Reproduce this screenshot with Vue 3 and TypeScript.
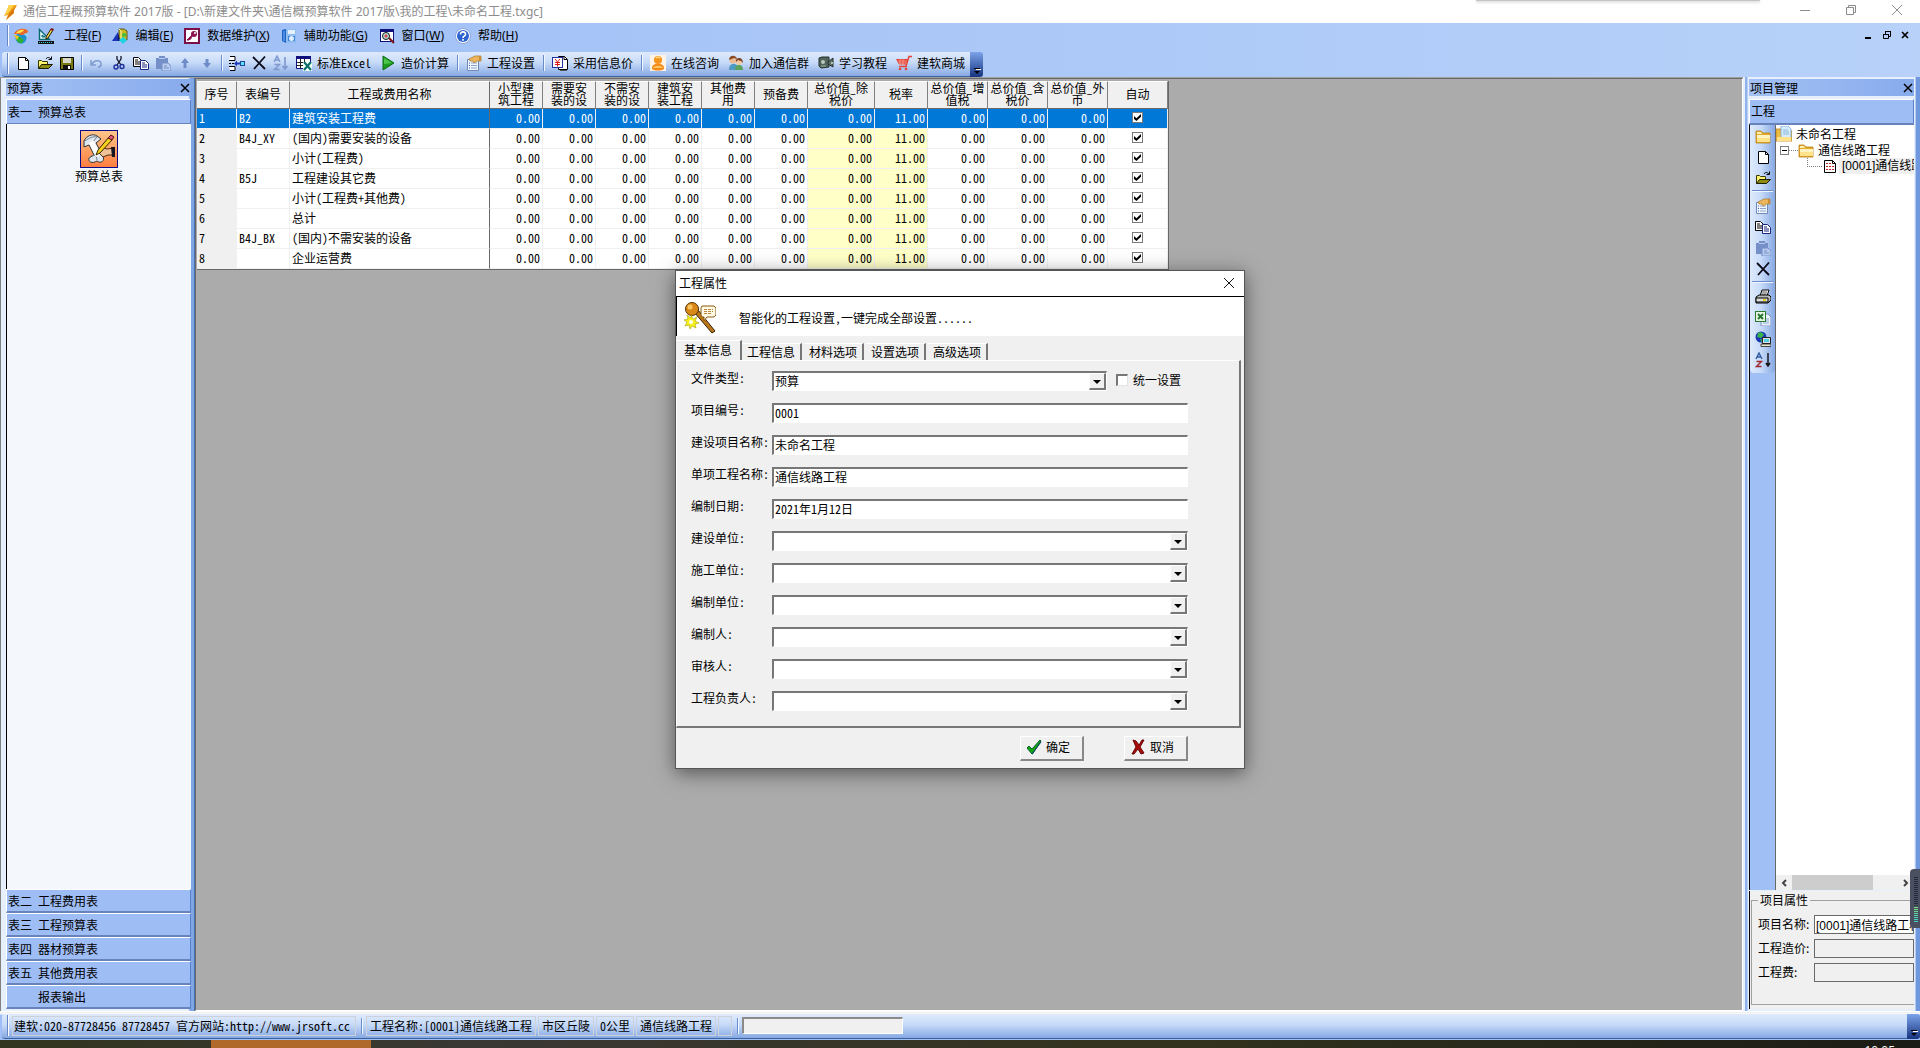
<script setup lang="ts">
import { ref } from 'vue'

const icons: Record<string, string> = {
  logo: '<path d="M7 1h8l-3 5v3L4 16l2-5-4 1 3-6z" fill="#f6a81c"/><path d="M7 1h5L6 9l-3 2 2-5z" fill="#ffd34d"/><path d="M15 1l-3 5v3L4 16l4-8z" fill="#d9780c"/>',
  globe: '<circle cx="8" cy="10" r="5.500" fill="#1c8fd0"/><path d="M3 10c3-3 5 0 8 2l-2 3c-3 1-6-2-6-5z" fill="#2fae3a"/><path d="M1 6c2-5 11-7 14-3 0 4-8 5-9 3z" fill="#e8662a"/><path d="M3 5c2-3 6-4 8-3-1 2-5 4-8 3z" fill="#ffe04a"/><path d="M1 7l5 1-2 4z" fill="#f8c21a"/><path d="M10 6l5-1v4z" fill="#8fd8ff"/>',
  ruler: '<path d="M1.500 1.500v10h10z" fill="#e8ffff" stroke="#086870" stroke-width="1.400"/><path d="M4 7v2h3z" fill="#9fc3f5" stroke="#086870"/><path d="M0 13h16v3H0z" fill="#101010"/><path d="M1 14.500h14" stroke="#34cfe0" stroke-dasharray="1 1"/><path d="M8 9l5-8 2 1-5 8-2 1z" fill="#f5df51" stroke="#201800"/><path d="M12 2l1.500-2L16 1l-1 2z" fill="#8b1c1c"/>',
  shapes: '<path d="M7 1h5l3 2v9h-6l-2-2z" fill="#c9bb24" stroke="#5e5710"/><path d="M7 1l2 2v9" stroke="#fff3a0" fill="none"/><path d="M6 4v9H0z" fill="#1931b5"/><path d="M6 4l2 9H6z" fill="#0a1566"/><path d="M7 12l4-3 4 3-4 4z" fill="#1ad5df"/><circle cx="12" cy="7" r="2" fill="#3fbf3f"/>',
  key: '<rect x="1" y="1" width="14" height="14" fill="#fff" stroke="#7b1048" stroke-width="2"/><circle cx="10" cy="6" r="3" fill="#8c1450"/><circle cx="11" cy="5" r="1" fill="#fff"/><path d="M8 7l-5 5h2l1-1h1v-2h1z" fill="#8c1450" stroke="#8c1450"/>',
  help2: '<path d="M1 2l4-1v14l-4-2z" fill="#1d63c8"/><path d="M5 1h10v14H5z" fill="#8fbdf0"/><path d="M7 2h7v4H7z" fill="#e3f0ff"/><path d="M7 8h7v5H7z" fill="#3f82d8"/><circle cx="10.500" cy="10.500" r="2.500" fill="#dfeeff"/><path d="M3 3v10" stroke="#7fb4f8"/>',
  find: '<rect x="1.500" y="1.500" width="13" height="12" fill="#fff" stroke="#10107a"/><path d="M1 1h14v3H1z" fill="#10107a"/><circle cx="7" cy="8" r="3.500" fill="#b5f0ee" stroke="#101010"/><path d="M5 8h4M7 6v4" stroke="#e11d1d"/><path d="M10 10l5 5" stroke="#7a1212" stroke-width="2"/>',
  help: '<circle cx="8" cy="8" r="7.500" fill="#fff" stroke="#8ea5d8"/><circle cx="8" cy="8" r="6" fill="#2a62cf"/><path d="M5.500 6.500c0-4 5.500-3 5 0-.3 1.500-2.500 1.500-2.500 3.500M8 11v1.800" stroke="#fff" stroke-width="1.700" fill="none"/>',
  new: '<path d="M3.500 2.500h7l3 3v9h-10z" fill="#fff" stroke="#000"/><path d="M10.500 2.500v3h3" fill="none" stroke="#000"/>',
  open: '<path d="M1.500 13.500v-8h3l1 1h5v3" fill="#fff36b" stroke="#3a3a00"/><path d="M1.500 13.500l3-4h11l-4 4z" fill="#8c8c12" stroke="#1d1d00"/><path d="M9 4c1-2 3-2 5 0M14.500 1.500v3h-3" fill="none" stroke="#000"/>',
  save: '<path d="M1.500 2.500h13v12h-13z" fill="#7a7a12" stroke="#000"/><path d="M4 3h8v5H4z" fill="#d8d8c8"/><path d="M4 10h8v4H4z" fill="#111"/><path d="M9 11h2v3H9z" fill="#fff"/>',
  undo: '<path d="M2 5v5h5M3 9c3-5 10-4 9 1-.3 1.500-2 2-3 2" stroke="#7d9bd0" fill="none" stroke-width="1.500"/>',
  cut: '<path d="M6 1v3l4 6M10 1v3l-4 6" stroke="#14142a" fill="none" stroke-width="1.300"/><circle cx="5" cy="12" r="2" fill="none" stroke="#1c2e9a" stroke-width="1.400"/><circle cx="11" cy="11.500" r="2" fill="none" stroke="#1c2e9a" stroke-width="1.400"/>',
  copy: '<path d="M.5 2.500h5l3 3v6h-8z" fill="#fff" stroke="#000"/><path d="M2 5h3M2 7h5M2 9h5" stroke="#000"/><path d="M7.500 5.500h5l3 3v6h-8z" fill="#fff" stroke="#1a237f"/><path d="M9 8h3M9 10h5M9 12h5" stroke="#1a237f"/>',
  paste: '<path d="M1 3h3V1h6v2h3v11H1z" fill="#7590c8"/><path d="M4 3h6v1H4z" fill="#b8cbee"/><path d="M7 8h6l3 3v5H7z" fill="#b9cbee" stroke="#7590c8"/><path d="M9 11h3M9 13h5" stroke="#7590c8"/>',
  up: '<path d="M8 3l4 5H9.500v5h-3V8H4z" fill="#6e8cc8"/>',
  down: '<path d="M8 13l4-5H9.500V4h-3v4H4z" fill="#6e8cc8"/>',
  tree: '<path d="M1 1.500h5v4H0M1 15.500h5v-4H0" fill="#fff" stroke="#000"/><path d="M0 8.500h6" stroke="#000" stroke-dasharray="2 1"/><path d="M5 8.500l3-3v2h3v2H8v2z" fill="#1d3bb8"/><rect x="11.500" y="6.500" width="4" height="4" fill="#59e6f0" stroke="#2048a0"/>',
  del: '<path d="M2 2l12 12M14 1.500L3 14" stroke="#0c0c18" stroke-width="1.800"/>',
  sort: '<path d="M1 7l3-6 3 6M2 5h4M1.500 9.500h5l-5 5h5" stroke="#7d98cd" fill="none" stroke-width="1.400"/><path d="M12 2v11M9.500 11l2.500 3 2.500-3" stroke="#7d98cd" fill="none" stroke-width="1.600"/>',
  sortc: '<path d="M1 7l3-6 3 6M2 5h4" stroke="#315c9f" fill="none" stroke-width="1.400"/><path d="M1.500 9.500h5l-5 5h5" stroke="#a1282c" fill="none" stroke-width="1.400"/><path d="M13 1v12M11 11l2 3 2-3" stroke="#111" fill="none" stroke-width="1.400"/>',
  excel: '<path d="M0 1h15v3H0z" fill="#10107a"/><path d="M.5 4v9.500h14V4" fill="#fff" stroke="#10107a"/><path d="M1 7.500h13M1 10.500h13M4.500 4v9M8.500 4v9" stroke="#222"/><path d="M7 7h9v9H7z" fill="#e9fff2"/><path d="M8 7l7 8M15 7l-7 8" stroke="#0b6b6b" stroke-width="2"/>',
  play: '<path d="M3 1l11 7-11 7z" fill="#1e9a1e" stroke="#0c6d14"/><path d="M4 3l8 5-8 1z" fill="#4fc64a"/>',
  props: '<path d="M1.500 4.500h11v11h-11z" fill="#f0f6ff" stroke="#7089b8"/><path d="M5 8h6M5 10.500h6M5 13h6" stroke="#8da2c8"/><path d="M3 8h1M3 10.500h1M3 13h1" stroke="#2d62c0"/><path d="M3 4l6-3h6v5h-4l-3 2-1-2H4z" fill="#edb65b" stroke="#a8762a" stroke-width=".7"/><path d="M13 1h2v5h-2z" fill="#c98d35"/>',
  price: '<path d="M6.500 1.500h6l3 3v10h-9z" fill="#fff" stroke="#000"/><path d="M12 1.500v3h3" stroke="#000" fill="none"/><path d="M8 15.500h7" stroke="#555"/><rect x=".5" y="2.500" width="10" height="10" fill="#fff" stroke="#2631a0"/><path d="M3 4l2.500 3L8 4M3 7.500h5M3 9.500h5M5.500 7v4.500" stroke="#d81919" fill="none"/>',
  user: '<rect width="16" height="16" fill="#fdf2e4"/><path d="M2 14c0-5 3-5 6-5s6 0 6 5c-3 2-9 2-12 0z" fill="#f28a1a"/><circle cx="8" cy="5" r="4" fill="#f7941d"/><path d="M6 3c1-1 3-1 4 0" stroke="#ffe08a" stroke-width="1.500" fill="none"/><path d="M3 13c2-3 8-3 10 0" fill="#ffc45b"/>',
  users: '<path d="M1 15c0-5 2-6 5-6s4 2 4 6z" fill="#4d9ac2"/><path d="M7 15c0-4 2-5 4-5s4 1 4 5z" fill="#5aa35c"/><circle cx="5" cy="5" r="3.500" fill="#e8bb92"/><path d="M1 5c0-6 8-5 8-1L6 3z" fill="#8a4b2a"/><circle cx="11" cy="7" r="3" fill="#f0c8a4"/><path d="M8 7c-1-5 7-6 7 1l-2-2-3-1z" fill="#7b3f20"/>',
  video: '<path d="M1 3l3-1h7v10l-8 1-2-2z" fill="#50645a" stroke="#26302c"/><path d="M10 7l5-4v9l-5-3z" fill="#5d6d66" stroke="#26302c"/><circle cx="5" cy="7" r="2" fill="#b9c9be"/><path d="M3 11h5" stroke="#9db3a5"/><circle cx="14" cy="8" r="1" fill="#c7e8d1"/>',
  cart: '<path d="M0 4h12l-1.500 5.500H3z" fill="#e34234"/><path d="M10 11l3-9.500h3M3 11.500h8" stroke="#e34234" stroke-width="1.500" fill="none"/><path d="M2 6h9M3 8h8M4 4v6M7 4v6" stroke="#f8b9ad" stroke-width=".6"/><circle cx="4" cy="14" r="1.300" fill="#e34234"/><circle cx="10" cy="14" r="1.300" fill="#e34234"/>',
  folder: '<path d="M1 3h5l2 2h7v10H1z" fill="#e3a92a" stroke="#b98116" stroke-width=".8"/><path d="M2 4h4l1 2H2z" fill="#fff0b0"/><path d="M2 7h13v7H2z" fill="#ffe28a"/><path d="M2 7h13v3H2z" fill="#fff3bf"/>',
  docs: '<path d="M0 3h5v2h11v10H0z" fill="#eebb42" stroke="#b98116" stroke-width=".8"/><path d="M5 0h7l3 3v9H5z" fill="#d4ecfc" stroke="#77a7cf" stroke-width=".8"/><path d="M7 4h5M7 6h6M7 8h6" stroke="#8db7dc"/><path d="M1 11h14v4H1z" fill="#ffe28a"/>',
  report: '<path d="M2.500 2.500h8l3 3v9h-11z" fill="#fff" stroke="#000"/><path d="M10.500 2.500v3h3" fill="none" stroke="#000"/><path d="M4 5.500h5M4 8.500h8M4 11.500h8" stroke="#c42424" stroke-dasharray="2 1"/>',
  print: '<path d="M5 7l2-6h7l-2 6z" fill="#fff" stroke="#000"/><path d="M7 3h5M6.500 5h5" stroke="#555"/><path d="M1 8l3-2h10l2 2v3l-3 3H1z" fill="#b9b9b9" stroke="#000"/><path d="M1 9h12v4H1z" fill="#dcdcdc" stroke="#000"/><path d="M8 11h3" stroke="#e4d31c" stroke-width="2"/>',
  xls: '<path d="M6 4h7l3 3v9H6z" fill="#e7f0fa" stroke="#7c92b8"/><path d="M8 9h6M8 11h6M8 13h6" stroke="#8fa9d4"/><rect x=".5" y="1.500" width="10" height="10" fill="#e6f4e4" stroke="#2b7a34"/><path d="M3 4l5 5M8 4L3 9" stroke="#26762f" stroke-width="2"/>',
  net: '<circle cx="6" cy="6" r="5.500" fill="#1b36b4"/><path d="M3 2c3-2 5 0 6 2l-3 3-4-1zM5 8l4 1-2 3z" fill="#38b54a"/><path d="M7.500 6.500h8v6h-8z" fill="#ddd" stroke="#222"/><path d="M9 8h5v3H9z" fill="#4fd0e8"/><path d="M6 13h10v2.500H6z" fill="#e4e4cc" stroke="#222" stroke-width=".8"/>',
}

const menus = [
  { icon: 'ruler', text: '工程', key: 'F' },
  { icon: 'shapes', text: '编辑', key: 'E' },
  { icon: 'key', text: '数据维护', key: 'X' },
  { icon: 'help2', text: '辅助功能', key: 'G' },
  { icon: 'find', text: '窗口', key: 'W' },
  { icon: 'help', text: '帮助', key: 'H' },
]

const tools: { icon: string; text?: string }[] = [
  { icon: 'new' }, { icon: 'open' }, { icon: 'save' }, { icon: '|' },
  { icon: 'undo' }, { icon: 'cut' }, { icon: 'copy' }, { icon: 'paste' }, { icon: 'up' }, { icon: 'down' }, { icon: '|' },
  { icon: 'tree' }, { icon: 'del' }, { icon: 'sort' },
  { icon: 'excel', text: '标准Excel' }, { icon: 'play', text: '造价计算' }, { icon: '|' },
  { icon: 'props', text: '工程设置' }, { icon: '|' },
  { icon: 'price', text: '采用信息价' }, { icon: '|' },
  { icon: 'user', text: '在线咨询' }, { icon: 'users', text: '加入通信群' },
  { icon: 'video', text: '学习教程' }, { icon: 'cart', text: '建软商城' },
]

const sideTools = ['folder', 'new', 'open', '|', 'props', 'copy', 'paste', 'del', '|', 'print', 'xls', 'net', 'sortc']

const sections = ['表二 工程费用表', '表三 工程预算表', '表四 器材预算表', '表五 其他费用表']

const columns = [
  { text: '序号', w: 40 }, { text: '表编号', w: 53 }, { text: '工程或费用名称', w: 200 },
  { text: '小型建\n筑工程', w: 53 }, { text: '需要安\n装的设', w: 53 }, { text: '不需安\n装的设', w: 53 },
  { text: '建筑安\n装工程', w: 53 }, { text: '其他费\n用', w: 53 }, { text: '预备费', w: 53 },
  { text: '总价值_除\n税价', w: 67 }, { text: '税率', w: 53 }, { text: '总价值_增\n值税', w: 60 },
  { text: '总价值_含\n税价', w: 60 }, { text: '总价值_外\n币', w: 60 }, { text: '自动', w: 60 },
]
const amounts = ['0.00', '0.00', '0.00', '0.00', '0.00', '0.00', '0.00', '11.00', '0.00', '0.00', '0.00']

const rows = ref([
  { code: 'B2', name: '建筑安装工程费', auto: true },
  { code: 'B4J_XY', name: '(国内)需要安装的设备', auto: true },
  { code: '', name: '小计(工程费)', auto: true },
  { code: 'B5J', name: '工程建设其它费', auto: true },
  { code: '', name: '小计(工程费+其他费)', auto: true },
  { code: '', name: '总计', auto: true },
  { code: 'B4J_BX', name: '(国内)不需安装的设备', auto: true },
  { code: '', name: '企业运营费', auto: true },
])
const selected = ref(0)

const tabs = ['基本信息', '工程信息', '材料选项', '设置选项', '高级选项']
const activeTab = ref(0)

const textFields = ref([
  { id: 'no', label: '项目编号:', value: '0001' },
  { id: 'project', label: '建设项目名称:', value: '未命名工程' },
  { id: 'single', label: '单项工程名称:', value: '通信线路工程' },
  { id: 'date', label: '编制日期:', value: '2021年1月12日' },
])
const comboFields = [
  { id: 'owner', label: '建设单位:' },
  { id: 'builder', label: '施工单位:' },
  { id: 'compiler', label: '编制单位:' },
  { id: 'author', label: '编制人:' },
  { id: 'auditor', label: '审核人:' },
  { id: 'leader', label: '工程负责人:' },
]
const unified = ref(false)
const projectName = ref('[0001]通信线路工程')
</script>

<template>
  <div class="app">
    <header class="titlebar">
      <svg class="icon" viewBox="0 0 16 16" v-html="icons.logo"></svg>
      <span class="title">通信工程概预算软件 2017版 - [D:\新建文件夹\通信概预算软件 2017版\我的工程\未命名工程.txgc]</span>
      <div class="winbtns">
        <button aria-label="最小化"><svg viewBox="0 0 12 12"><path d="M1 6.500h10" /></svg></button>
        <button aria-label="还原"><svg viewBox="0 0 12 12"><path d="M1.500 3.500h7v7h-7zM3.500 3.500v-2h7v7h-2" /></svg></button>
        <button aria-label="关闭"><svg viewBox="0 0 12 12"><path d="M1 1l10 10M11 1L1 11" /></svg></button>
      </div>
      <div class="peek"></div>
    </header>

    <nav class="menubar">
      <i class="grip"></i>
      <svg class="icon globe" viewBox="0 0 16 16" v-html="icons.globe"></svg>
      <button v-for="(m, i) in menus" :key="m.key" class="menu" :class="{ first: i === 0 }">
        <svg class="icon" viewBox="0 0 16 16" v-html="icons[m.icon]"></svg>
        <span>{{ m.text }}(<u>{{ m.key }}</u>)</span>
      </button>
      <div class="mdibtns">
        <button aria-label="最小化文档"><svg viewBox="0 0 10 10"><path d="M1 8h6" stroke-width="2" /></svg></button>
        <button aria-label="还原文档"><svg viewBox="0 0 10 10"><path d="M1.500 4.500h5v4h-5zM3.500 4V1.500h5v5H7M1 4.500h6M3 1.500h6" /></svg></button>
        <button aria-label="关闭文档"><svg viewBox="0 0 10 10"><path d="M2 2l6 6M8 2L2 8" stroke-width="1.700" /></svg></button>
      </div>
    </nav>

    <div class="toolrow">
      <div class="toolbar">
        <i class="grip"></i>
        <template v-for="(t, i) in tools" :key="i">
          <i v-if="t.icon === '|'" class="sep"></i>
          <button v-else class="tool" :class="{ labelled: t.text }" :aria-label="t.text || t.icon">
            <svg class="icon" viewBox="0 0 16 16" v-html="icons[t.icon]"></svg>
            <span v-if="t.text">{{ t.text }}</span>
          </button>
        </template>
      </div>
      <button class="more" aria-label="更多">
        <svg viewBox="0 0 8 8"><path d="M1 1.500h6" stroke="#000" /><path d="M1 4h6l-3 3z" fill="#000" /><path d="M3 2.500h5" stroke="#fff" /></svg>
      </button>
    </div>

    <main class="main">
      <aside class="left">
        <div class="panelhead">
          <span>预算表</span>
          <button class="close" aria-label="关闭"><svg viewBox="0 0 10 10"><path d="M1 1l8 8M9 1L1 9" /></svg></button>
        </div>
        <button class="section top">表一 预算总表</button>
        <div class="leftbody">
          <button class="bigitem">
            <svg viewBox="0 0 36 36">
              <path d="M3 10c2-5 9-8 13-5l4 3-5 4 7 13c2 5-2 8-6 5-5 3-9 1-8-3l5-3-5-10-5 2z" fill="#dfe6ee" stroke="#333" />
              <path d="M4 10c4-3 8-5 12-4l-6 7M8 27c3-4 8-4 8 2M11 13l7 12" fill="none" stroke="#71808f" />
              <path d="M8 12l4-3 8 15-5 2z" fill="#fff" />
              <path d="M18 22l4-5 4 1 7-1v7h-6l-5 2z" fill="#eec299" stroke="#4a2a12" />
              <path d="M30 16h4v10h-3z" fill="#151520" />
              <path d="M15 24l2-5L28 6l3 3-12 13z" fill="#f3cf1c" stroke="#332600" />
              <path d="M27 7l3-3 3 2-2 3z" fill="#e3557c" stroke="#511" />
            </svg>
            <span>预算总表</span>
          </button>
        </div>
        <button v-for="s in sections" :key="s" class="section">{{ s }}</button>
        <button class="section last">报表输出</button>
      </aside>

      <section class="canvas">
        <table class="grid">
          <colgroup>
            <col v-for="c in columns" :key="c.text" :style="{ width: c.w + 'px' }" />
          </colgroup>
          <thead>
            <tr><th v-for="c in columns" :key="c.text">{{ c.text }}</th></tr>
          </thead>
          <tbody>
            <tr v-for="(r, i) in rows" :key="i" :class="{ sel: i === selected }" @click="selected = i">
              <td class="idx">{{ i + 1 }}</td>
              <td>{{ r.code }}</td>
              <td class="name">{{ r.name }}</td>
              <td v-for="(a, j) in amounts" :key="j" class="num" :class="{ hot: j === 6 || j === 7 }">{{ a }}</td>
              <td class="auto"><input v-model="r.auto" type="checkbox" class="check" :aria-label="'自动 ' + r.name" /></td>
            </tr>
          </tbody>
        </table>
      </section>

      <aside class="right">
        <div class="panelhead">
          <span>项目管理</span>
          <button class="close" aria-label="关闭"><svg viewBox="0 0 10 10"><path d="M1 1l8 8M9 1L1 9" /></svg></button>
        </div>
        <div class="section top">工程</div>
        <div class="rightbody">
          <div class="sidecol">
            <div class="sidebar">
              <template v-for="(t, i) in sideTools" :key="i">
                <i v-if="t === '|'" class="hsep"></i>
                <button v-else class="sidetool" :aria-label="t">
                  <svg class="icon" viewBox="0 0 16 16" v-html="icons[t]"></svg>
                </button>
              </template>
            </div>
          </div>
          <div class="treebox">
            <ul class="tree">
              <li>
                <svg class="icon" viewBox="0 0 16 16" v-html="icons.docs"></svg><span>未命名工程</span>
              </li>
              <li class="lvl1">
                <i class="expander"></i><i class="dots"></i>
                <svg class="icon" viewBox="0 0 16 16" v-html="icons.folder"></svg><span>通信线路工程</span>
              </li>
              <li class="lvl2">
                <i class="elbow"></i>
                <svg class="icon" viewBox="0 0 16 16" v-html="icons.report"></svg><span class="current">[0001]通信线路工程</span>
              </li>
            </ul>
            <div class="hscroll">
              <svg viewBox="0 0 8 8"><path d="M6 1L3 4l3 3" /></svg>
              <i class="thumb"></i>
              <svg viewBox="0 0 8 8"><path d="M2 1l3 3-3 3" /></svg>
            </div>
          </div>
        </div>
        <div class="props">
          <fieldset>
            <legend>项目属性</legend>
            <div class="prop"><label for="p-name">项目名称:</label><input id="p-name" v-model="projectName" class="white" /></div>
            <div class="prop"><label for="p-cost">工程造价:</label><input id="p-cost" readonly /></div>
            <div class="prop"><label for="p-fee">工程费:</label><input id="p-fee" readonly /></div>
          </fieldset>
        </div>
      </aside>
    </main>

    <footer class="status">
      <div class="statusbar">
        <i class="grip"></i>
        <span class="cell wide">建软:020-87728456 87728457 官方网站:http://www.jrsoft.cc</span>
        <i class="sep"></i>
        <span class="cell">工程名称:[0001]通信线路工程</span>
        <span class="cell">市区丘陵</span>
        <span class="cell">0公里</span>
        <span class="cell">通信线路工程</span>
        <span class="cell blank"></span>
        <i class="sep"></i>
        <div class="progress"></div>
      </div>
      <button class="more" aria-label="更多">
        <svg viewBox="0 0 8 8"><path d="M1 1.500h6" stroke="#000" /><path d="M1 4h6l-3 3z" fill="#000" /><path d="M3 2.500h5" stroke="#fff" /></svg>
      </button>
    </footer>
    <div class="taskbar"><i class="task"></i><span class="clock">10:05</span></div>

    <div class="gauge"><i></i></div>

    <div class="overlay">
      <form class="dialog" @submit.prevent>
        <div class="dlgtitle">
          <span>工程属性</span>
          <button type="button" aria-label="关闭"><svg viewBox="0 0 12 12"><path d="M1 1l10 10M11 1L1 11" /></svg></button>
        </div>
        <div class="banner">
          <svg viewBox="0 0 32 32">
            <path d="M10 10l4-2 17 21-3 2z" fill="#b9761a" stroke="#3a2204" />
            <circle cx="8" cy="7" r="6.500" fill="#d98818" stroke="#5a3304" />
            <circle cx="6" cy="5" r="2.500" fill="#f9c767" />
            <path d="M18 4h12l2 2v7l-2 2h-7l-3 4v-4h-2l-1-2V6z" fill="#fff9e6" stroke="#8a5a10" />
            <path d="M20 7.500h9M20 9.500h9M20 11.500h7" stroke="#c08a3a" stroke-dasharray="3 1" />
            <path d="M7 13l2 4 4-2-2 4 4 2-4 1 1 4-4-2-2 3-1-4-4 1 2-4-3-2 4-1-1-4 4 3z" fill="#f6f01c" stroke="#a8a000" stroke-width=".6" />
            <circle cx="7" cy="20" r="2" fill="#fffff0" />
          </svg>
          <span>智能化的工程设置,一键完成全部设置......</span>
        </div>
        <div class="tabs" role="tablist">
          <button v-for="(t, i) in tabs" :key="t" type="button" role="tab" :class="{ active: i === activeTab }" @click="activeTab = i">{{ t }}</button>
        </div>
        <div class="page">
          <div class="field">
            <label for="f-type">文件类型:</label>
            <div class="combo short">
              <select id="f-type"><option>预算</option></select>
              <i class="drop"></i>
            </div>
            <label class="unified"><input v-model="unified" type="checkbox" class="check sunken" />统一设置</label>
          </div>
          <div v-for="f in textFields" :key="f.id" class="field">
            <label :for="'f-' + f.id">{{ f.label }}</label>
            <input :id="'f-' + f.id" v-model="f.value" type="text" class="text" />
          </div>
          <div v-for="f in comboFields" :key="f.id" class="field">
            <label :for="'f-' + f.id">{{ f.label }}</label>
            <div class="combo">
              <select :id="'f-' + f.id"><option></option></select>
              <i class="drop"></i>
            </div>
          </div>
        </div>
        <div class="actions">
          <button type="submit">
            <svg viewBox="0 0 16 16"><path d="M1 9l2-2 3 3 8-9 1 1-8.500 13H6z" fill="#12a812" stroke="#0a5c2a" /><path d="M6 15l9-12" stroke="#123a7a" /></svg>确定
          </button>
          <button type="button">
            <svg viewBox="0 0 16 16"><path d="M3 1l3 1 3 4 3-5h2l-4 7 4 6-3 1-3-5-4 5H2l4-7z" fill="#a80c0c" stroke="#6a0505" /></svg>取消
          </button>
        </div>
      </form>
    </div>
  </div>
</template>

<style>
html,
body {
  background: #ababab;
}
</style>

<style scoped>
* {
  box-sizing: border-box;
}
.app {
  position: relative;
  display: flex;
  flex-direction: column;
  min-height: 100vh;
  overflow: hidden;
  font: 12px/16px "Noto Sans CJK SC", sans-serif;
  font-feature-settings: "hwid";
  color: #000;
}
button,
input,
select {
  font: inherit;
  font-feature-settings: inherit;
  color: inherit;
  margin: 0;
  padding: 0;
  border: 0;
  background: none;
  border-radius: 0;
  outline: 0;
}
i {
  display: block;
}
.icon {
  flex: none;
  width: 16px;
  height: 16px;
}
.titlebar {
  position: relative;
  display: flex;
  align-items: center;
  height: 23px;
  background: #fff;
  color: #8c8c8c;
  font-family: "Noto Sans", "Noto Sans CJK SC", sans-serif;
  font-feature-settings: normal;
  padding-left: 2px;
}
.title {
  margin-left: 5px;
  white-space: nowrap;
}
.winbtns {
  display: flex;
  margin-left: auto;
}
.winbtns button {
  width: 46px;
  height: 20px;
}
.winbtns svg,
.dlgtitle svg {
  width: 12px;
  height: 12px;
  fill: none;
  stroke: #8c8c8c;
}
.peek {
  position: absolute;
  top: 0;
  right: 160px;
  width: 284px;
  height: 1px;
  background: #c4c4c4;
  box-shadow: 0 1px 3px #aaa;
}
.menubar {
  display: flex;
  align-items: center;
  height: 29px;
  padding: 0 6px 4px 7px;
  background: linear-gradient(90deg, #9ebef5, #b7d1f9);
  font-family: "Noto Sans", "Noto Sans CJK SC", sans-serif;
  font-feature-settings: normal;
}
.grip {
  flex: none;
  width: 2px;
  height: 21px;
  border-left: 1px solid #6487c8;
  background: #fff;
}
.globe {
  margin: 0 9px 0 4px;
}
.menu {
  display: flex;
  align-items: center;
  gap: 7px;
  margin-right: 11px;
  white-space: nowrap;
}
.menu.first {
  gap: 10px;
}
.mdibtns {
  display: flex;
  margin-left: auto;
}
.mdibtns button {
  width: 18px;
  height: 16px;
}
.mdibtns svg {
  width: 10px;
  height: 10px;
  fill: none;
  stroke: #000;
}
.toolrow {
  display: flex;
  height: 25px;
  padding-left: 2px;
  background: linear-gradient(90deg, #9ebef5, #b7d1f9);
}
.toolbar {
  display: flex;
  align-items: center;
  height: 25px;
  padding: 0 0 2px 5px;
  border-bottom: 1px solid #3b619c;
  border-radius: 3px 0 0 3px;
  background: linear-gradient(#dfeafc, #c6daf8 45%, #86a8e3);
}
.toolbar .grip {
  margin-right: 3px;
}
.sep {
  flex: none;
  width: 2px;
  height: 16px;
  margin: 0 3px;
  background: linear-gradient(90deg, #6a8ccb 1px, #f1f7ff 1px);
}
.tool {
  display: flex;
  align-items: center;
  justify-content: center;
  width: 22px;
  height: 22px;
  white-space: nowrap;
}
.tool.labelled {
  width: auto;
  gap: 5px;
  padding: 0 5px 0 4px;
}
.more {
  display: flex;
  align-items: flex-end;
  justify-content: center;
  flex: none;
  width: 13px;
  height: 25px;
  padding-bottom: 2px;
  border-radius: 0 3px 3px 0;
  background: linear-gradient(#7ba3ea, #16337f);
}
.more svg {
  width: 8px;
  height: 8px;
}
.main {
  display: flex;
  flex: 1;
  border-top: 1px solid #a0a0a0;
}
.left {
  display: flex;
  flex-direction: column;
  flex: none;
  width: 195px;
  padding: 1px 3px 2px 5px;
  border-left: 1px solid #808080;
  border-right: 1px solid #4a70b4;
  background: linear-gradient(90deg, #e6effc, #e6effc 97%, #7fa6e4 98%);
}
.panelhead {
  display: flex;
  align-items: center;
  justify-content: space-between;
  height: 17px;
  margin-bottom: 3px;
  padding: 0 1px;
  background: linear-gradient(90deg, #a3c1f5, #88abec);
}
.close svg {
  display: block;
  width: 10px;
  height: 10px;
  stroke: #000;
  stroke-width: 1.5;
}
.section {
  flex: none;
  height: 24px;
  padding-left: 1px;
  border: 1px solid #fff;
  border-right-color: #5b80cb;
  border-bottom: 2px solid #6883ba;
  background: #9fbdf5;
  text-align: left;
  line-height: 20px;
  white-space: pre;
}
.section.top {
  height: 25px;
  border-bottom-width: 1px;
}
.section.last {
  padding-left: 31px;
}
.leftbody {
  flex: 1;
  padding-top: 6px;
  border-left: 1px solid #000;
  background: #f4f8fd;
}
.bigitem {
  display: flex;
  flex-direction: column;
  align-items: center;
  margin: 0 auto;
}
.bigitem svg {
  width: 38px;
  height: 38px;
  border: 1px solid #0a0a8a;
  background: linear-gradient(#ffc58a, #ff7f3f);
}
.canvas {
  flex: 1;
  min-width: 0;
  border: 1px solid #696969;
  border-right-color: #fff;
  border-bottom-color: #fff;
  padding: 2px 0 0 1px;
  background: #ababab;
}
.grid {
  width: 972px;
  table-layout: fixed;
  border-spacing: 0;
  border-right: 1px solid #696969;
  border-bottom: 1px solid #696969;
  background: #fff;
}
th {
  height: 27px;
  padding: 0 0 2px;
  border-right: 1px solid #808080;
  border-bottom: 1px solid #696969;
  border-top: 1px solid #fff;
  background: #f0f0f0;
  font-weight: 400;
  line-height: 12px;
  white-space: pre;
}
td {
  height: 20px;
  padding: 0 2px 2px;
  border-right: 1px solid #f0f0f0;
  border-bottom: 1px solid #f0f0f0;
  line-height: 16px;
  white-space: nowrap;
}
.idx {
  background: #f0f0f0;
}
.name {
  border-right-color: #696969;
}
th:nth-child(3) {
  border-right-color: #696969;
}
.num {
  text-align: right;
}
.hot {
  background: #ffffc8;
}
.sel td {
  background: #0078d7;
  color: #fff;
}
.auto {
  text-align: center;
}
.check {
  appearance: none;
  position: relative;
  display: block;
  width: 11px;
  height: 11px;
  margin: 0 auto;
  border: 1px solid #7a7a7a;
  background: #fff;
}
.check:checked::after {
  content: "";
  position: absolute;
  inset: 1px;
  background: #000;
  clip-path: polygon(0 30%, 35% 60%, 100% 0, 100% 40%, 35% 100%, 0 70%);
}
.right {
  display: flex;
  flex-direction: column;
  flex: none;
  width: 177px;
  margin-top: -1px;
  padding: 2px 6px 2px 4px;
  border-left: 2px solid #e6effc;
  background: linear-gradient(90deg, #8fb1ec 2px, #e6effc 3px, #e6effc 97%, #6f98df 98%);
}
.right .section.top {
  line-height: 22px;
}
.rightbody {
  display: flex;
  flex: 1;
  min-height: 0;
  border-left: 1px solid #000;
  border-top: 1px solid #6883ba;
}
.sidecol {
  flex: none;
  width: 25px;
  background: #a0bff5;
}
.sidebar {
  padding: 0 0 3px;
  border-radius: 0 0 4px 4px;
  background: linear-gradient(90deg, #dfeafc, #c6daf8 45%, #86a8e3);
}
.sidetool {
  display: flex;
  align-items: center;
  justify-content: center;
  width: 25px;
  height: 21px;
}
.hsep {
  width: 21px;
  height: 2px;
  margin: 2px auto 3px;
  background: linear-gradient(#6a8ccb 1px, #f1f7ff 1px);
}
.treebox {
  display: flex;
  flex-direction: column;
  flex: 1;
  min-width: 0;
  border-left: 1px solid #696969;
  background: #fff;
}
.tree {
  flex: 1;
  margin: 0;
  padding: 1px 0 0;
  overflow: hidden;
  list-style: none;
}
.tree li {
  display: flex;
  align-items: center;
  height: 16px;
  white-space: nowrap;
}
.tree span {
  flex: none;
  padding-left: 4px;
}
.tree .current {
  margin-left: 1px;
  background: #f0f0f0;
  font-family: "Liberation Sans", "Noto Sans CJK SC", sans-serif;
  padding-left: 3px;
}
.lvl1 {
  padding-left: 4px;
}
.lvl2 {
  padding-left: 31px;
}
.expander {
  flex: none;
  width: 9px;
  height: 9px;
  border: 1px solid #808080;
  background: linear-gradient(#000, #000) center / 5px 1px no-repeat;
}
.dots {
  flex: none;
  width: 9px;
  border-top: 1px dotted #808080;
}
.elbow {
  flex: none;
  align-self: flex-start;
  width: 15px;
  height: 9px;
  border-left: 1px dotted #808080;
  border-bottom: 1px dotted #808080;
}
.hscroll {
  display: flex;
  align-items: center;
  height: 15px;
  background: #f0f0f0;
}
.hscroll svg {
  flex: none;
  width: 8px;
  height: 8px;
  margin: 0 4px;
  fill: none;
  stroke: #444;
  stroke-width: 2;
}
.thumb {
  width: 81px;
  height: 15px;
  margin-right: auto;
  background: #cdcdcd;
}
.props {
  padding: 2px 0 4px;
  margin-top: 1px;
  border-left: 1px solid #000;
  background: #f0f0f0;
  overflow: hidden;
}
fieldset {
  min-width: 0;
  height: 112px;
  margin: 0 -4px 0 1px;
  padding: 8px 0 0 6px;
  border: 1px solid #a0a0a0;
}
legend {
  padding: 0 2px;
  line-height: 14px;
}
.prop {
  display: flex;
  align-items: center;
  height: 18px;
  margin-bottom: 6px;
}
.prop label {
  flex: none;
  width: 56px;
  line-height: 14px;
  font-feature-settings: normal;
}
.prop input {
  flex: 1;
  min-width: 0;
  height: 19px;
  margin-right: 3px;
  padding-left: 1px;
  border: 1px solid #696969;
  font-family: "Liberation Sans", "Noto Sans CJK SC", sans-serif;
}
.prop .white {
  background: #fff;
}
.status {
  display: flex;
  align-items: flex-end;
  height: 29px;
  padding: 0 0 1px 2px;
  border-top: 1px solid #fff;
  background: linear-gradient(#f0f0f0 1px, #fff 2px, #9ebef5 3px);
}
.statusbar {
  display: flex;
  align-items: center;
  flex: 1;
  height: 25px;
  padding: 0 0 1px 5px;
  border-bottom: 1px solid #3b619c;
  border-radius: 3px 0 0 3px;
  background: linear-gradient(#dfeafc, #c6daf8 45%, #86a8e3);
}
.cell {
  height: 20px;
  margin-right: 2px;
  padding: 0 3px;
  border: 1px solid #ccd1da;
  line-height: 17px;
  white-space: pre;
}
.cell.wide {
  width: 344px;
  margin-left: 3px;
  padding: 0 1px;
}
.cell.blank {
  width: 14px;
}
.progress {
  width: 161px;
  height: 17px;
  border: 1px solid #fff;
  border-top: 2px solid #8a8a8a;
  border-left: 2px solid #8a8a8a;
  background: #f0f0f0;
}
.taskbar {
  position: relative;
  display: flex;
  justify-content: space-between;
  height: 8px;
  overflow: hidden;
  background: linear-gradient(90deg, #32351f, #3a3833 25%, #33331f 60%, #1c1c16);
}
.task {
  width: 160px;
  margin-left: 211px;
  background: #b0692a;
}
.clock {
  margin: 3px 25px 0 0;
  color: #fff;
  font: 12px/16px "Open Sans", sans-serif;
}
.gauge {
  position: absolute;
  right: 0;
  bottom: 120px;
  width: 10px;
  height: 59px;
  padding: 7px 2px 6px 4px;
  border-radius: 4px 0 0 4px;
  background: #4b5061;
}
.gauge i {
  height: 46px;
  background:
    repeating-linear-gradient(#4b5061 0 1px, transparent 1px 2px),
    linear-gradient(#23283a 64%, #7de07a 65%, #3fd0c8);
}
.overlay {
  position: absolute;
  inset: 0 0 10px;
  display: grid;
  place-items: center;
  pointer-events: none;
}
.dialog {
  width: 570px;
  border: 1px solid #555;
  background: #f0f0f0;
  box-shadow: 0 4px 18px rgba(0, 0, 0, 0.5);
  pointer-events: auto;
}
.dlgtitle {
  display: flex;
  align-items: center;
  justify-content: space-between;
  height: 25px;
  padding: 0 9px 0 3px;
  background: #fff;
}
.dlgtitle button {
  height: 12px;
}
.dlgtitle svg {
  display: block;
  stroke: #111;
}
.banner {
  display: flex;
  align-items: center;
  gap: 23px;
  height: 40px;
  padding: 3px 0 0 7px;
  border-top: 1px solid #000;
  border-left: 1px solid #000;
  background: #fff;
}
.banner svg {
  width: 32px;
  height: 32px;
}
.tabs {
  display: flex;
  align-items: flex-end;
  height: 24px;
}
.tabs button {
  width: 60px;
  height: 17px;
  margin-right: 2px;
  border-top: 1px solid #fff;
  border-right: 2px solid #777;
  line-height: 16px;
  text-align: center;
}
.tabs .active {
  width: 66px;
  height: 20px;
  margin-right: 0;
  line-height: 18px;
}
.page {
  height: 368px;
  margin-right: 3px;
  padding: 10px 0 0 14px;
  border: 1px solid #fff;
  border-right: 2px solid #777;
  border-bottom: 2px solid #777;
}
.field {
  display: flex;
  height: 32px;
}
.field > label:first-child {
  flex: none;
  width: 81px;
  line-height: 14px;
  white-space: nowrap;
}
.text,
.combo {
  width: 416px;
  height: 20px;
  border: 1px solid #fff;
  border-top: 2px solid #777;
  border-left: 2px solid #777;
  background: #fff;
}
.text {
  padding: 0 0 1px 1px;
  line-height: 16px;
}
.combo {
  position: relative;
}
.combo.short {
  width: 335px;
}
.combo select {
  appearance: none;
  display: block;
  width: 100%;
  height: 17px;
  padding-left: 1px;
  line-height: 16px;
}
.drop {
  position: absolute;
  top: 0;
  right: 0;
  width: 17px;
  height: 17px;
  border: 1px solid #fff;
  border-right: 2px solid #777;
  border-bottom: 2px solid #777;
  background: #f0f0f0;
  pointer-events: none;
}
.drop::after {
  content: "";
  position: absolute;
  left: 3px;
  top: 6px;
  border: 4px solid transparent;
  border-top-color: #000;
  border-bottom: 0;
}
.unified {
  display: flex;
  align-items: center;
  gap: 5px;
  height: 18px;
  margin-left: 9px;
}
.check.sunken {
  width: 12px;
  height: 12px;
  border: 1px solid #e4e4e4;
  border-top: 2px solid #777;
  border-left: 2px solid #777;
}
.actions {
  display: flex;
  justify-content: flex-end;
  gap: 40px;
  padding: 8px 56px 7px 0;
}
.actions button {
  display: flex;
  align-items: center;
  gap: 4px;
  width: 64px;
  height: 25px;
  padding: 0 0 2px 5px;
  border: 1px solid #fff;
  border-right: 2px solid #888;
  border-bottom: 2px solid #888;
}
.actions svg {
  width: 16px;
  height: 16px;
}
</style>
